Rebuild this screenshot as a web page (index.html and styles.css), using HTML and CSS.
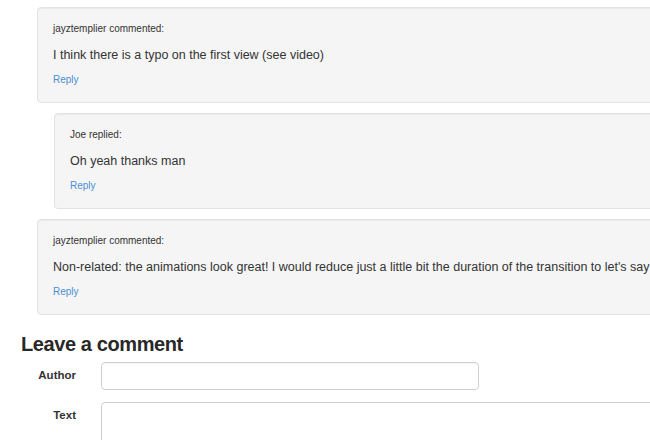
FILE: index.html
```html
<!DOCTYPE html>
<html>
<head>
<meta charset="utf-8">
<link rel="stylesheet" href="styles.css">
</head>
<body>
<div class="page">
  <div class="comments">
    <div class="well">
      <div class="meta">jayztemplier commented:</div>
      <div class="body">I think there is a typo on the first view (see video)</div>
      <a class="reply" href="#">Reply</a>
    </div>
    <div class="well nested">
      <div class="meta">Joe replied:</div>
      <div class="body">Oh yeah thanks man</div>
      <a class="reply" href="#">Reply</a>
    </div>
    <div class="well">
      <div class="meta">jayztemplier commented:</div>
      <div class="body">Non-related: the animations look great! I would reduce just a little bit the duration of the transition to let's say 0.2s.</div>
      <a class="reply" href="#">Reply</a>
    </div>
  </div>
  <h3 class="title">Leave a comment</h3>
  <form class="form">
    <div class="row">
      <label class="label">Author</label>
      <input class="input" type="text">
    </div>
    <div class="row">
      <label class="label">Text</label>
      <textarea class="textarea"></textarea>
    </div>
  </form>
</div>
</body>
</html>
```
FILE: styles.css
```css
html, body {
  margin: 0;
  padding: 0;
  overflow: hidden;
  background: #fff;
}
body {
  font-family: "Liberation Sans", Arial, sans-serif;
  color: #333;
}
.page {
  width: 1000px;
  padding: 7px 0 0 21px;
}
.comments {
  margin-left: 16px;
  display: flex;
  flex-direction: column;
  gap: 10px;
}
.well {
  background: #f5f5f5;
  border: 1px solid #e3e3e3;
  border-radius: 4px;
  box-shadow: inset 0 1px 1px rgba(0,0,0,0.05);
  padding: 14px 15px 15px 15px;
  display: flex;
  flex-direction: column;
  align-items: flex-start;
}
.nested {
  margin-left: 17px;
}
.meta {
  font-size: 10px;
  line-height: 14px;
  color: #333;
}
.body {
  font-size: 12.5px;
  line-height: 18px;
  margin-top: 10px;
  color: #333;
  white-space: nowrap;
}
.reply {
  font-size: 10px;
  line-height: 14px;
  margin-top: 9px;
  color: #4a8fd4;
  text-decoration: none;
}
.title {
  margin: 17px 0 6px 0;
  font-size: 20px;
  line-height: 24px;
  font-weight: bold;
  letter-spacing: -0.4px;
  color: #282828;
}
.form {
  display: flex;
  flex-direction: column;
  gap: 12px;
}
.row {
  display: flex;
  align-items: flex-start;
  gap: 25px;
}
.label {
  width: 55px;
  text-align: right;
  font-size: 11.5px;
  line-height: 17px;
  padding-top: 5px;
  font-weight: bold;
  color: #333;
}
.input {
  box-sizing: border-box;
  width: 378px;
  height: 28px;
  margin: 0;
  border: 1px solid #cfcfcf;
  border-radius: 4px;
  background: #fff;
  box-shadow: inset 0 1px 1px rgba(0,0,0,0.04);
}
.textarea {
  box-sizing: border-box;
  width: 700px;
  height: 80px;
  margin: 0;
  border: 1px solid #cfcfcf;
  border-radius: 4px;
  background: #fff;
  resize: none;
}
```
